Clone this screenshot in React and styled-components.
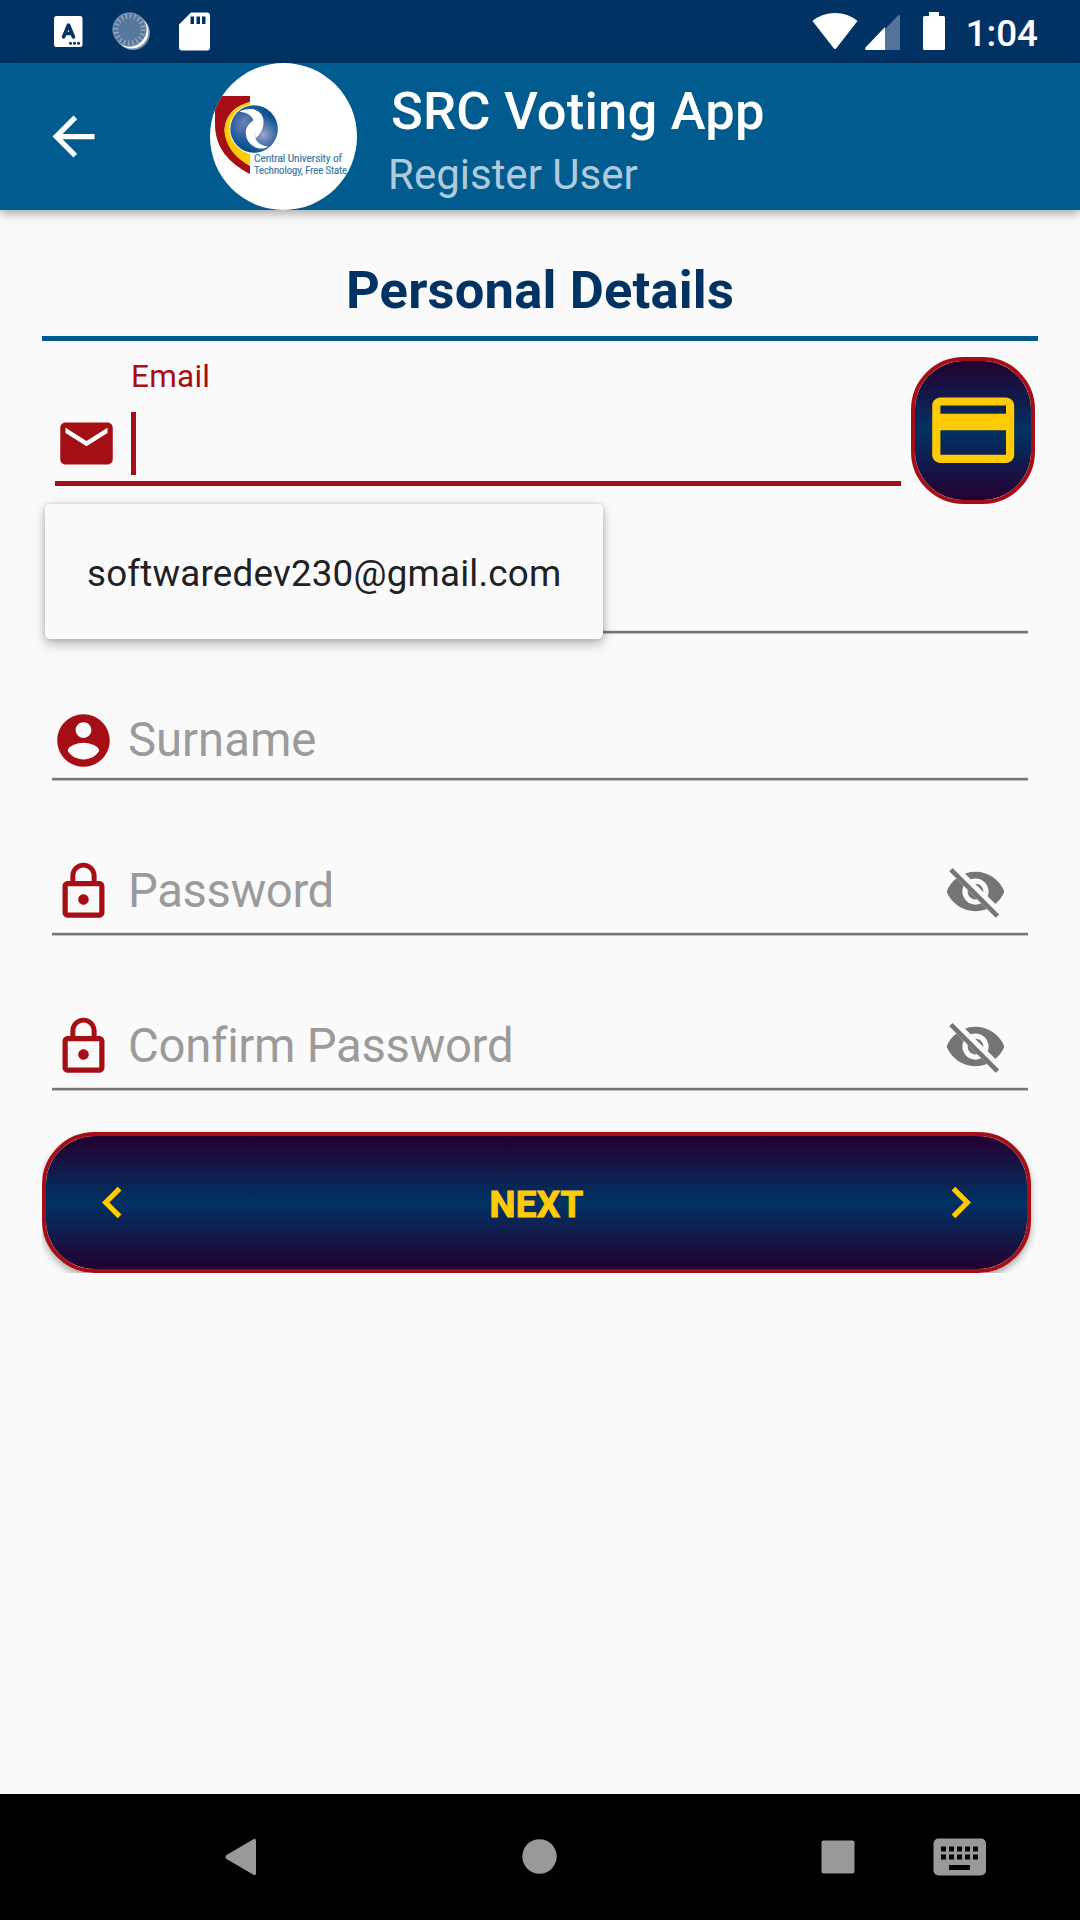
import React from "react";
import styled, { createGlobalStyle } from "styled-components";

const c = {
  navy: "#013264",
  blue: "#005b8e",
  red: "#a60e15",
  gold: "#ffcb05",
  page: "#fafafa",
  grey: "#757575",
  hint: "#9b9b9b",
};

const GlobalStyle = createGlobalStyle`
  * { box-sizing: border-box; }
  body { margin: 0; background: ${c.page}; font-family: Roboto, "Noto Sans", sans-serif; }
  svg { display: block; flex: none; }
`;

const Screen = styled.div`
  width: 1080px;
  height: 1920px;
  display: flex;
  flex-direction: column;
  background: ${c.page};
  overflow: hidden;
`;

const StatusBar = styled.header`
  height: 63px;
  flex: none;
  display: flex;
  justify-content: space-between;
  background: ${c.navy};
  padding: 0 42px 0 52px;
`;

const StatusGroup = styled.div`
  display: flex;
  align-items: center;
`;

const Clock = styled.span`
  margin-left: 20px;
  font-size: 36.75px;
  font-weight: 500;
  line-height: 43px;
  padding-top: 4px;
  color: #fff;
`;

const AppBar = styled.div`
  height: 147px;
  flex: none;
  display: flex;
  align-items: center;
  background: ${c.blue};
  padding-left: 42px;
  box-shadow: 0 3px 10px rgba(0, 0, 0, 0.36);
`;

const Logo = styled.div`
  width: 147px;
  height: 147px;
  margin-left: 105px;
  border-radius: 50%;
  overflow: hidden;
  background: #fff;
`;

const Titles = styled.div`
  align-self: flex-start;
  display: flex;
  flex-direction: column;
  padding: 17px 0 0 31px;
`;

const Title = styled.h1`
  margin: 0 0 8px 3px;
  font-size: 52.5px;
  font-weight: 500;
  line-height: 62px;
  letter-spacing: 0.2px;
  color: #fff;
`;

const Subtitle = styled.div`
  font-size: 42px;
  line-height: 49px;
  color: rgba(255, 255, 255, 0.7);
`;

const Main = styled.main`
  flex: 1;
  padding: 38px 42px 0;
`;

const Heading = styled.h2`
  margin: 0;
  height: 93px;
  border-bottom: 5px solid ${c.blue};
  font-size: 52.5px;
  font-weight: 700;
  line-height: 84px;
  letter-spacing: 0.18px;
  text-align: center;
  color: ${c.navy};
`;

const EmailRow = styled.div`
  position: relative;
  display: flex;
  gap: 10px;
  height: 163px;
  padding: 16px 3px 0 13px;
`;

const EmailField = styled.div`
  flex: 1;
  height: 129px;
  display: flex;
  flex-direction: column;
  justify-content: space-between;
  border-bottom: 5px solid ${c.red};
  padding-bottom: 6px;
`;

const FloatingLabel = styled.label`
  padding: 1px 0 0 76px;
  font-size: 31.5px;
  line-height: 37px;
  letter-spacing: 0.25px;
  color: ${c.red};
`;

const InputRow = styled.div`
  height: 63px;
  display: flex;
  align-items: center;
`;

const Caret = styled.span`
  width: 5px;
  height: 63px;
  margin-left: 13px;
  background: ${c.red};
`;

const Suggestions = styled.div`
  position: absolute;
  z-index: 2;
  left: 3px;
  top: 163px;
  width: 558px;
  height: 135px;
  padding-left: 42px;
  border-radius: 5px;
  background: ${c.page};
  box-shadow: 0 5px 12px rgba(0, 0, 0, 0.28), 0 0 5px rgba(0, 0, 0, 0.14);
  font-size: 36.75px;
  line-height: 139px;
  letter-spacing: 0.2px;
  color: #202124;
`;

const gradient = `linear-gradient(#240030, ${c.navy}, #240030)`;

const CardButton = styled.button`
  width: 124px;
  height: 147px;
  padding: 0;
  display: flex;
  align-items: center;
  justify-content: center;
  border: 4px solid ${c.red};
  border-radius: 52.5px;
  background: ${gradient} padding-box;
`;

const Field = styled.div`
  height: ${(p) => p.$height}px;
  margin: 0 10px;
  padding-right: 21px;
  display: flex;
  flex-direction: column;
  justify-content: flex-end;
  padding-bottom: ${(p) => p.$gap + 4}px;
  background: linear-gradient(#dedede 0 1px, ${c.grey} 1px 3px, #bfbfbf 3px 4px) bottom / 100% 4px no-repeat;
`;

const Hint = styled.span`
  flex: 1;
  padding: 0 0 1px 13px;
  font-size: 47.25px;
  line-height: 62px;
  letter-spacing: ${(p) => p.$tracking || 0}px;
  color: ${c.hint};
`;

const ButtonClip = styled.div`
  margin-top: 41px;
  clip-path: inset(-12px -12px 0 0);
`;

const NextButton = styled.button`
  width: 989px;
  height: 141px;
  padding: 0 35px;
  display: flex;
  align-items: center;
  justify-content: space-between;
  border: 4px solid ${c.red};
  border-radius: 52.5px;
  background: ${gradient} padding-box;
  box-shadow: 0 4px 7px rgba(0, 0, 0, 0.32);
  font-family: inherit;
  color: ${c.gold};
`;

const ButtonLabel = styled.span`
  padding-top: 3px;
  font-size: 36.75px;
  font-weight: 700;
  line-height: 43px;
  letter-spacing: 0.3px;
  -webkit-text-stroke: 1px ${c.gold};
`;

const NavBar = styled.nav`
  height: 126px;
  flex: none;
  background: #000;
  display: flex;
  align-items: center;
  padding-left: 225px;
`;

const NavItem = styled.div`
  width: ${(p) => p.$width}px;
`;

const Icon = ({ d, color, size = 63, children }) => (
  <svg width={size} height={size} viewBox="0 0 24 24" fill={color}>
    {d && <path d={d} />}
    {children}
  </svg>
);

const paths = {
  back: "M20 11H7.83l5.59-5.59L12 4l-8 8 8 8 1.41-1.41L7.83 13H20v-2z",
  mail: "M20 4H4c-1.1 0-1.99.9-1.99 2L2 18c0 1.1.9 2 2 2h16c1.1 0 2-.9 2-2V6c0-1.1-.9-2-2-2z",
  card: "M20 4H4c-1.11 0-1.99.89-1.99 2L2 18c0 1.11.89 2 2 2h16c1.11 0 2-.89 2-2V6c0-1.11-.89-2-2-2zm0 14H4v-6h16v6zm0-10H4V6h16v2z",
  person:
    "M12 2C6.48 2 2 6.48 2 12s4.48 10 10 10 10-4.48 10-10S17.52 2 12 2zm0 3c1.66 0 3 1.34 3 3s-1.34 3-3 3-3-1.34-3-3 1.34-3 3-3zm0 14.2c-2.5 0-4.71-1.28-6-3.22.03-1.99 4-3.08 6-3.08 1.99 0 5.97 1.09 6 3.08-1.29 1.94-3.5 3.22-6 3.22z",
  lock: "M12 17c1.1 0 2-.9 2-2s-.9-2-2-2-2 .9-2 2 .9 2 2 2zm6-9h-1V6c0-2.76-2.24-5-5-5S7 3.24 7 6v2H6c-1.1 0-2 .9-2 2v10c0 1.1.9 2 2 2h12c1.1 0 2-.9 2-2V10c0-1.1-.9-2-2-2zM8.9 6c0-1.71 1.39-3.1 3.1-3.1s3.1 1.39 3.1 3.1v2H8.9V6zM18 20H6V10h12v10z",
  left: "M15.41 7.41L14 6l-6 6 6 6 1.41-1.41L10.83 12z",
  right: "M10 6L8.59 7.41 13.17 12l-4.58 4.59L10 18l6-6z",
  eye: "M12 4.5C7 4.5 2.73 7.61 1 12c1.73 4.39 6 7.5 11 7.5s9.27-3.11 11-7.5c-1.73-4.39-6-7.5-11-7.5zM12 17c-2.76 0-5-2.24-5-5s2.24-5 5-5 5 2.24 5 5-2.24 5-5 5zm0-8c-1.66 0-3 1.34-3 3s1.34 3 3 3 3-1.34 3-3-1.34-3-3-3z",
};

const MailIcon = () => (
  <Icon d={paths.mail} color={c.red}>
    <path fill="#fff" d="M20 8l-8 5-8-5V6l8 5 8-5z" />
  </Icon>
);

const HiddenIcon = () => (
  <Icon color={c.grey}>
    <clipPath id="eyeGap">
      <path d="M2 4.27L19.73 22l2.54-2.54L4.54 1.73V1H23v22H1V4.27z" />
    </clipPath>
    <path d={paths.eye} clipPath="url(#eyeGap)" />
    <path d="M3.27 3L21 20.73 19.73 22 2 4.27z" />
  </Icon>
);

const UniversityLogo = () => (
  <svg width="147" height="147" viewBox="210 63 147 147">
    <defs>
      <radialGradient id="globeLeft" cx="0.34" cy="0.4" r="0.55">
        <stop offset="0" stopColor="#7f89bb" />
        <stop offset="0.55" stopColor="#2c629f" />
        <stop offset="1" stopColor="#004c88" />
      </radialGradient>
      <radialGradient id="globeRight" cx="0.7" cy="0.62" r="0.5">
        <stop offset="0" stopColor="#a2a6cd" />
        <stop offset="0.6" stopColor="#4271ab" stopOpacity="0.7" />
        <stop offset="1" stopColor="#004c88" stopOpacity="0" />
      </radialGradient>
    </defs>
    <path d="M215 96H250V102C231 107 224 119 225 133C227 147 238 159 250 166V174C229 163 215 148 215 124Z" fill="#a60e15" />
    <path d="M250 102C233 106 224 119 224.500 132C226 147 237 160 250 165V154C239 151 231 141 231 129C231 117 239 108 250 105Z" fill={c.gold} />
    <circle cx="254" cy="129" r="24.500" fill="#fff" />
    <circle cx="254" cy="129" r="23.700" fill="url(#globeLeft)" />
    <circle cx="254" cy="129" r="23.700" fill="url(#globeRight)" />
    <path
      d="M239.300 111.700C244 109 249 108.500 253.300 109.300C259 110.500 262.500 114.500 263.300 119C264.300 125 262.500 132 255.800 138.500C254.800 136 255 133.500 255.500 131.500C253.500 137 256 145 268.300 146.800C263 149.500 258 149 254 146.500C249 143.500 246.500 139.500 246 135C245.500 131 246 128.500 248 125.500C249.500 123.300 251.500 122 253.600 120C253.800 122 253.800 124.500 253.200 126.500C255.500 121 252 112.500 239.300 111.700Z"
      fill="#fff"
    />
    <g fill="#3b79a8" stroke="#3b79a8" strokeWidth="0.2" fontFamily="Roboto, sans-serif" fontSize="10">
      <text x="254" y="162.300" textLength="88" lengthAdjust="spacingAndGlyphs">Central University of</text>
      <text x="254" y="174" textLength="93" lengthAdjust="spacingAndGlyphs">Technology, Free State</text>
    </g>
  </svg>
);

const Notifications = () => (
  <svg width="160" height="63" viewBox="52 0 160 63">
    <rect x="54" y="16" width="28.500" height="31" rx="2.500" fill="#fff" />
    <path d="M63.500 37L68.500 25L73.500 37M65.500 33.500H71.500" fill="none" stroke={c.navy} strokeWidth="3.500" strokeLinecap="round" strokeLinejoin="round" />
    <g fill={c.navy}>
      <circle cx="70.500" cy="43.300" r="1.500" />
      <circle cx="74.500" cy="43.300" r="1.500" />
      <circle cx="78.500" cy="43.300" r="1.500" />
    </g>
    <circle cx="133" cy="33" r="17" fill="#7890ab" />
    <circle cx="131.500" cy="31.500" r="17" fill="#fff" />
    <circle cx="129.500" cy="29.500" r="17" fill="#58779c" />
    <circle cx="129.500" cy="29.500" r="13.500" fill="none" stroke="#9aadc3" strokeWidth="5" strokeDasharray="1.300 2.941" />
    <circle cx="129.500" cy="29.500" r="16.500" fill="none" stroke="#8299b4" strokeWidth="0.900" />
    <path d="M191 12.500H207Q210 12.500 210 15.500V47.500Q210 50.500 207 50.500H182Q179 50.500 179 47.500V24.500Z" fill="#fff" />
    <path d="M190.500 16.500h3.500v7.500h-3.500zM196.500 16.500h3.500v7.500h-3.500zM202 16.500h3.500v7.500h-3.500z" fill={c.navy} />
  </svg>
);

const Signals = () => (
  <svg width="134" height="63" viewBox="812 0 134 63" fill="#fff">
    <path d="M812.500 21Q822 13 835 13Q848 13 857.500 21L836.500 48Q835 50 833.500 48Z" />
    <path d="M865 50L898 15.500Q900 14 900 16.500V48.500Q900 50 898.500 50Z" fill="#54739a" />
    <path d="M885 27V50H866Q864.500 49.500 865.500 47.500Z" />
    <path d="M929 12H939V16H943.500Q945 16 945 17.500V48.500Q945 50 943.500 50H924.500Q923 50 923 48.500V17.500Q923 16 924.500 16H929Z" />
  </svg>
);

const keys = [0, 1, 2, 3, 4];

const passwordFields = [
  { label: "Password", tracking: -0.35 },
  { label: "Confirm Password", tracking: -0.27 },
];

export default function App() {
  return (
    <>
      <GlobalStyle />
      <Screen>
        <StatusBar>
          <StatusGroup>
            <Notifications />
          </StatusGroup>
          <StatusGroup>
            <Signals />
            <Clock>1:04</Clock>
          </StatusGroup>
        </StatusBar>
        <AppBar>
          <Icon d={paths.back} color="#fff" />
          <Logo>
            <UniversityLogo />
          </Logo>
          <Titles>
            <Title>SRC Voting App</Title>
            <Subtitle>Register User</Subtitle>
          </Titles>
        </AppBar>
        <Main>
          <Heading>Personal Details</Heading>
          <EmailRow>
            <EmailField>
              <FloatingLabel>Email</FloatingLabel>
              <InputRow>
                <MailIcon />
                <Caret />
              </InputRow>
            </EmailField>
            <CardButton aria-label="Scan card">
              <Icon d={paths.card} color={c.gold} size={98.4} />
            </CardButton>
            <Suggestions>softwaredev230@gmail.com</Suggestions>
          </EmailRow>
          <Field $height={130} $gap={5} />
          <Field $height={147} $gap={5}>
            <InputRow>
              <Icon d={paths.person} color={c.red} />
              <Hint>Surname</Hint>
            </InputRow>
          </Field>
          {passwordFields.map(({ label, tracking }) => (
            <Field key={label} $height={155} $gap={9}>
              <InputRow>
                <Icon d={paths.lock} color={c.red} />
                <Hint $tracking={tracking}>{label}</Hint>
                <HiddenIcon />
              </InputRow>
            </Field>
          ))}
          <ButtonClip>
            <NextButton>
              <Icon d={paths.left} color={c.gold} />
              <ButtonLabel>NEXT</ButtonLabel>
              <Icon d={paths.right} color={c.gold} />
            </NextButton>
          </ButtonClip>
        </Main>
        <NavBar>
          <NavItem $width={297}>
            <svg width="32" height="38" viewBox="0 0 32 38" fill="#999">
              <path d="M28 1.500Q31 -0.500 31 3V35Q31 38.500 28 36.500L1.500 21Q-0.500 19 1.500 17Z" />
            </svg>
          </NavItem>
          <NavItem $width={299}>
            <svg width="36" height="36" viewBox="0 0 36 36" fill="#999">
              <circle cx="17.500" cy="17.500" r="17.200" />
            </svg>
          </NavItem>
          <NavItem $width={112}>
            <svg width="34" height="34" viewBox="0 0 34 34" fill="#999">
              <rect x="0.500" y="0.500" width="33" height="33" rx="2" />
            </svg>
          </NavItem>
          <svg width="54" height="38" viewBox="0 0 54 38">
            <rect x="0.500" y="0.500" width="52.500" height="37" rx="5" fill="#999" />
            {keys.map((k) => (
              <React.Fragment key={k}>
                <rect x={8 + k * 8} y="8.500" width="5" height="5" />
                <rect x={8 + k * 8} y="16.500" width="5" height="5" />
              </React.Fragment>
            ))}
            <rect x="16" y="27" width="21" height="5" />
          </svg>
        </NavBar>
      </Screen>
    </>
  );
}
